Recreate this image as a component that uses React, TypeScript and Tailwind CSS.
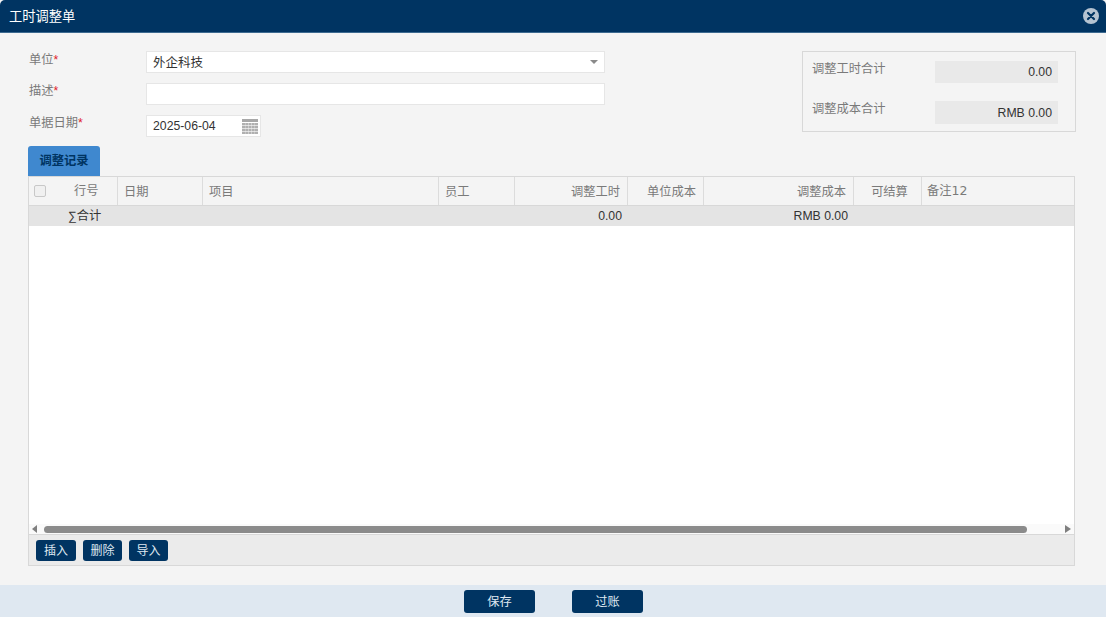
const font = { fontFamily: '"Liberation Sans", "Noto Sans CJK SC", sans-serif' };

const columns = [
  { label: "日期", width: "w-[85px]", cell: "text-left px-[6px]" },
  { label: "项目", width: "w-[236px]", cell: "text-left px-[6px]" },
  { label: "员工", width: "w-[76px]", cell: "text-left px-[6px]" },
  { label: "调整工时", width: "w-[113px]", cell: "text-right pr-[7px]" },
  { label: "单位成本", width: "w-[76px]", cell: "text-right pr-[7px]" },
  { label: "调整成本", width: "w-[150px]", cell: "text-right pr-[7px]" },
  { label: "可结算", width: "w-[68px]", cell: "text-center pl-[10px] pr-[6px]" },
];

const Required = () => <span className="text-[#e0202a]">*</span>;

const CalendarIcon = () => (
  <svg width="16" height="15" viewBox="0 0 16 15" className="shrink-0">
    <rect x="0" y="0" width="16" height="3" fill="#a8a8a8" />
    {[4, 7, 10, 13].map((y) =>
      [0, 3.25, 6.5, 9.75, 13].map((x) => (
        <rect key={`${x}-${y}`} x={x} y={y} width="3" height="2.4" fill="#b0b0b0" />
      )),
    )}
  </svg>
);

const ToolButton = ({ text, width }: { text: string; width: string }) => (
  <button className={`${width} h-[21px] pt-[1px] rounded-[3px] bg-[#003462] text-[12px] text-[#dfe8f1] flex items-center justify-center`}>
    {text}
  </button>
);

export default function App() {
  return (
    <div className="h-[617px] w-[1106px] flex flex-col bg-[#f4f4f4] overflow-hidden text-[#333]" style={font}>
      {/* Title bar */}
      <div className="h-[33px] shrink-0 bg-[#003462] rounded-t-[5px] border-b border-[#3d6a90] flex items-center justify-between pl-[9px] pr-[7px]">
        <span className="text-[13.25px] text-white pt-[1px]">工时调整单</span>
        <svg width="16" height="16" viewBox="0 0 16 16">
          <circle cx="8" cy="8" r="8" fill="#b4c3d1" />
          <path d="M5 5l6 6M11 5l-6 6" stroke="#003462" strokeWidth="2.2" strokeLinecap="round" />
        </svg>
      </div>

      {/* Form */}
      <div className="flex-1 flex flex-col pl-[28px] pr-[30px] pt-[18px]">
        <div className="h-[95px] flex justify-between">
          <div className="flex flex-col gap-[10px]">
            <div className="flex items-start">
              <label className="w-[118px] pl-[1px] text-[12.25px] leading-[14px] text-[#7a7a7a] pt-[2px]">单位<Required /></label>
              <div className="w-[459px] h-[22px] bg-white border border-[#e6e6e6] flex items-center justify-between pl-[6px] pr-[6px] text-[12.5px] text-[#333]">
                <span className="pt-[3px]">外企科技</span>
                <span className="w-0 h-0 border-x-[4px] border-x-transparent border-t-[4px] border-t-[#8a8a8a]" />
              </div>
            </div>
            <div className="flex items-start">
              <label className="w-[118px] pl-[1px] text-[12.25px] leading-[14px] text-[#7a7a7a] pt-[1px]">描述<Required /></label>
              <div className="w-[459px] h-[22px] bg-white border border-[#e6e6e6]" />
            </div>
            <div className="flex items-start">
              <label className="w-[118px] pl-[1px] text-[12.25px] leading-[14px] text-[#7a7a7a] pt-[1px]">单据日期<Required /></label>
              <div className="w-[115px] h-[22px] bg-white border border-[#e6e6e6] flex items-center justify-between pl-[6px] pr-[2px] text-[12.25px] text-[#333]">
                <span>2025-06-04</span>
                <CalendarIcon />
              </div>
            </div>
          </div>

          {/* Totals */}
          <div className="w-[274px] h-[81px] border border-[#d8d8d8] pl-[9px] pr-[17px] pt-[9px] flex flex-col gap-[18px]">
            <div className="flex justify-between items-start">
              <span className="text-[12.25px] leading-[14px] text-[#7a7a7a] pt-[1px]">调整工时合计</span>
              <div className="w-[123px] h-[22px] bg-[#e9e9e9] flex items-center justify-end pr-[6px] pt-[1px] text-[12.25px]">0.00</div>
            </div>
            <div className="flex justify-between items-start">
              <span className="text-[12.25px] leading-[14px] text-[#7a7a7a] pt-[1px]">调整成本合计</span>
              <div className="w-[123px] h-[23px] bg-[#e9e9e9] flex items-center justify-end pr-[6px] pt-[1px] text-[12.25px]">RMB 0.00</div>
            </div>
          </div>
        </div>

        {/* Tab */}
        <div className="w-[72px] h-[30px] shrink-0 rounded-t-[3px] bg-[#3f88cf] flex items-center justify-center text-[12.25px] font-bold text-[#003462]">
          调整记录
        </div>

        {/* Grid */}
        <div className="w-[1047px] h-[390px] border border-[#d8d8d8] flex flex-col">
          <div className="h-[29px] shrink-0 flex bg-[#f4f4f4] border-b border-[#d8d8d8] text-[12.25px] leading-[31px] text-[#7a7a7a]">
            <div className="w-[89px] shrink-0 flex items-center border-r border-[#dcdcdc] pl-[5px]">
              <span className="w-[12px] h-[12px] rounded-[2px] border border-[#c8c8c8] bg-[#f0f0f0]" />
              <span className="ml-[28px]">行号</span>
            </div>
            {columns.map((col) => (
              <div key={col.label} className={`${col.width} shrink-0 border-r border-[#dcdcdc] ${col.cell}`}>
                {col.label}
              </div>
            ))}
            <div className="flex-1 px-[5px] flex items-center gap-0 pt-[1px]">
              <span className="leading-none">备注</span>
              <span className="font-['DejaVu_Sans'] text-[12.5px] leading-none">12</span>
            </div>
          </div>
          <div className="h-[20px] shrink-0 flex items-center bg-[#e4e4e4] text-[12.25px] text-[#333]">
            <div className="w-[89px] shrink-0 pl-[39px]">∑合计</div>
            <div className="w-[85px] shrink-0" />
            <div className="w-[236px] shrink-0" />
            <div className="w-[76px] shrink-0" />
            <div className="w-[115px] shrink-0 text-right pr-[8px]">0.00</div>
            <div className="w-[76px] shrink-0" />
            <div className="w-[150px] shrink-0 text-right pr-[8px]">RMB 0.00</div>
          </div>
          <div className="flex-1 bg-white" />

          {/* Scrollbar */}
          <div className="h-[10px] shrink-0 bg-[#fafafa] flex items-center px-[3px] gap-[7px]">
            <span className="w-0 h-0 border-y-[4px] border-y-transparent border-r-[5px] border-r-[#7f7f7f]" />
            <div className="w-[983px] h-[7px] rounded-full bg-[#8b8b8b]" />
            <div className="flex-1" />
            <span className="w-0 h-0 border-y-[4px] border-y-transparent border-l-[6px] border-l-[#7f7f7f]" />
          </div>

          {/* Toolbar */}
          <div className="h-[31px] shrink-0 bg-[#ebebeb] border-t border-[#d8d8d8] flex items-center pl-[7px] gap-[7px]">
            <ToolButton text="插入" width="w-[40px]" />
            <ToolButton text="删除" width="w-[39px]" />
            <ToolButton text="导入" width="w-[39px]" />
          </div>
        </div>
      </div>

      {/* Footer */}
      <div className="h-[32px] shrink-0 bg-[#dfe8f1] flex items-center justify-center gap-[37px] pt-[1px]">
        <button className="w-[71px] h-[23px] pt-[1px] pl-[1px] rounded-[3px] bg-[#003462] text-[12.25px] text-[#dfe8f1]">保存</button>
        <button className="w-[71px] h-[23px] pt-[1px] pl-[1px] rounded-[3px] bg-[#003462] text-[12.25px] text-[#dfe8f1]">过账</button>
      </div>
    </div>
  );
}
